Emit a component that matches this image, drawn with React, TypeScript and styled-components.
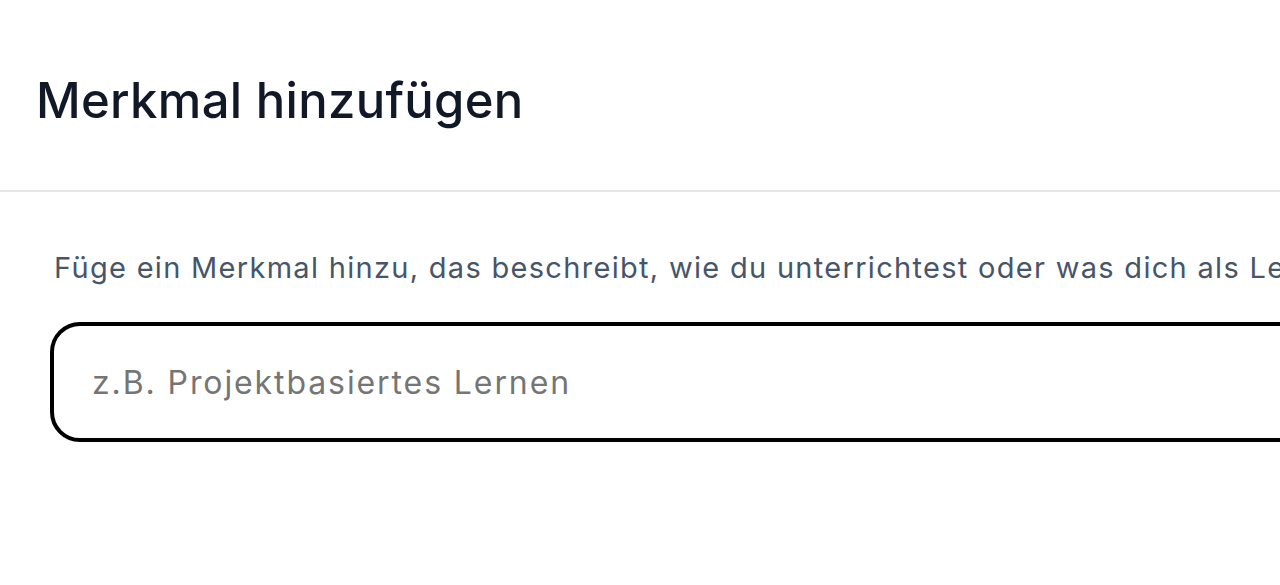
import React from "react";
import styled, { createGlobalStyle } from "styled-components";

const Global = createGlobalStyle`
  html, body {
    margin: 0;
    padding: 0;
    background: #ffffff;
    overflow: hidden;
  }
  body {
    font-family: Inter, "Noto Sans", sans-serif;
  }
`;

const Modal = styled.div`
  width: 1700px;
  height: 585px;
  background: #ffffff;
  display: flex;
  flex-direction: column;
`;

const Header = styled.header`
  padding: 72px 32px 60px 36px;
  border-bottom: 2px solid #e5e7eb;
`;

const Title = styled.h2`
  margin: 0;
  font-size: 49px;
  line-height: 58px;
  font-weight: 500;
  letter-spacing: 0.3px;
  color: #111827;
  white-space: nowrap;
`;

const Body = styled.div`
  padding: 56px 0 0 50px;
  display: flex;
  flex-direction: column;
  gap: 34px;
`;

const Description = styled.p`
  margin: 0 0 0 4px;
  font-size: 29px;
  line-height: 40px;
  letter-spacing: 1.3px;
  color: #475569;
  white-space: nowrap;
`;

const Input = styled.input`
  box-sizing: border-box;
  width: 1600px;
  height: 120px;
  border: 4px solid #000000;
  border-radius: 30px;
  padding: 0 38px;
  font-family: Inter, "Noto Sans", sans-serif;
  font-size: 32px;
  letter-spacing: 1.9px;
  color: #111827;
  background: #ffffff;
  outline: none;
  &::placeholder {
    color: #757575;
  }
`;

export default function App() {
  return (
    <>
      <Global />
      <Modal>
        <Header>
          <Title>Merkmal hinzufügen</Title>
        </Header>
        <Body>
          <Description>
            Füge ein Merkmal hinzu, das beschreibt, wie du unterrichtest oder was dich als Lehrkraft ausmacht.
          </Description>
          <Input placeholder="z.B. Projektbasiertes Lernen" />
        </Body>
      </Modal>
    </>
  );
}
